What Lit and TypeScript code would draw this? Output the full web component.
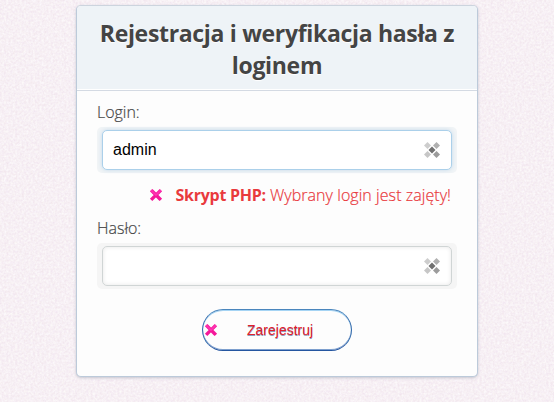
import { LitElement, html, css, svg } from "lit";
import { customElement, property } from "lit/decorators.js";

@customElement("cross-icon")
class CrossIcon extends LitElement {
  static styles = css`
    :host { display: block; width: 14px; height: 14px; }
    svg { display: block; }
  `;
  render() {
    return html`<svg width="14" height="14" viewBox="0 0 14 14">
      <path d="M2.9 2.9L11.1 11.1M11.1 2.9L2.9 11.1" stroke="#f5189a" stroke-width="3.8" stroke-linecap="square" fill="none" transform="translate(.7 .7) scale(.9)" />
      <path d="M2.6 2.6L7 7L11.4 2.6" stroke="#ff35b4" stroke-width="1.6" stroke-linecap="round" fill="none" />
    </svg>`;
  }
}

@customElement("text-field")
class TextField extends LitElement {
  @property() label = "";
  @property() value = "";
  @property({ type: Boolean, reflect: true }) active = false;

  static styles = css`
    :host { display: block; }
    .label {
      display: block; height: 22px; margin-bottom: 4px;
      font: 300 16px/22px "Open Sans", "Noto Sans", sans-serif;
      letter-spacing: -0.02px; color: #484848; -webkit-text-stroke: 0.2px #484848;
    }
    .ring { padding: 3px 5px; background: #f5f5f5; border-radius: 5px; }
    .box {
      box-sizing: border-box; height: 40px; padding: 0 11px 0 10px;
      display: flex; align-items: center; justify-content: space-between;
      background: #fff; border: 1px solid #d0d5d5; border-radius: 5px;
      box-shadow: inset 0 0 4px #e6e6e6;
      font: 16px/20px "Liberation Sans", Arial, sans-serif; color: #000;
    }
    :host([active]) .ring { background: #f1f4f6; }
    :host([active]) .box { border-color: #abd0ea; box-shadow: 0 0 4px #c3d9ea; }
    svg { display: block; }
  `;
  render() {
    const dots: [number, number, string][] = [
      [3.5, 3.5, "#cdcdcd"], [12.5, 3.5, "#b0b0b0"],
      [3.5, 12.5, "#c6c6c6"], [12.5, 12.5, "#9c9c9c"], [8, 8, "#707070"],
    ];
    return html`
      <span class="label">${this.label}</span>
      <div class="ring"><div class="box">
        <span>${this.value}</span>
        <svg width="16" height="16" viewBox="0 0 16 16">
          ${dots.map(([x, y, c]) => svg`<path d="M${x} ${y - 3.5}L${x + 3.5} ${y}L${x} ${y + 3.5}L${x - 3.5} ${y}Z" fill=${c} />`)}
        </svg>
      </div></div>`;
  }
}

@customElement("app-root")
class AppRoot extends LitElement {
  static styles = css`
    :host {
      display: block; position: relative; box-sizing: border-box;
      width: 554px; height: 402px; padding: 5px 0 0 76px; overflow: hidden;
      background: #f6f1f5;
    }
    .grain { position: absolute; inset: 0; }
    .card {
      position: relative; box-sizing: border-box; width: 402px; height: 372px;
      background: #fdfdfd; border: 1px solid #bccada; border-top-color: #ccd4de; border-radius: 5px;
      box-shadow: 0 1px 3px #c5c5cf; overflow: hidden;
    }
    h1 {
      box-sizing: border-box; margin: 0; height: 85px; padding-top: 11px;
      background: #eef3f7; border-bottom: 1px solid #d4dae3;
      box-shadow: inset 0 -1px #fff;
      font: 700 23px/32px "Open Sans", "Noto Sans", sans-serif;
      text-align: center; color: #444; text-shadow: 0 1px 1px #fff;
      letter-spacing: -0.32px; white-space: nowrap;
    }
    form { padding: 10px 20px 0; }
    .error {
      display: flex; align-items: center; justify-content: flex-end;
      height: 22px; margin: 11px 6px 11px 0;
      font: 300 16px/22px "Open Sans", "Noto Sans", sans-serif; color: #e93a3d; white-space: pre;
    }
    .error cross-icon { margin-right: 13px; }
    .error b { font-weight: 700; letter-spacing: -0.28px; }
    .error span { letter-spacing: 0.06px; -webkit-text-stroke: 0.2px #e93a3d; }
    button {
      display: flex; align-items: center; box-sizing: border-box;
      width: 150px; height: 42px; margin: 20px auto 0; padding: 0 0 0 1px;
      border: 1px solid #2f68aa; border-top-color: #4a86bd; border-bottom-color: #2556a0;
      border-radius: 21px; background: #fdfdfd; box-shadow: inset 0 1px #a5d4f4, inset 0 -1px #7d9fce;
      font: 14px/20px "Liberation Sans", Arial, sans-serif; color: #e0202c;
      text-shadow: 0 1px 0 rgba(44, 74, 128, 0.55);
    }
    button span { margin-left: 29px; }
  `;
  render() {
    return html`
      <svg class="grain" width="554" height="402">
        <filter id="grain" x="0" y="0" width="100%" height="100%" color-interpolation-filters="sRGB">
          <feTurbulence type="fractalNoise" baseFrequency="0.45" numOctaves="2" seed="4" />
          <feColorMatrix values="0.06 0 0 0 0.938  0.11 0 0 0 0.885  0.07 0.03 0 0 0.908  0 0 0 0 1" />
        </filter>
        <rect width="554" height="402" filter="url(#grain)" />
      </svg>
      <main class="card">
        <h1>Rejestracja i weryfikacja hasła z<br />loginem</h1>
        <form>
          <text-field label="Login:" value="admin" active></text-field>
          <div class="error"><cross-icon></cross-icon><b>Skrypt PHP:</b><span> Wybrany login jest zajęty!</span></div>
          <text-field label="Hasło:"></text-field>
          <button type="button"><cross-icon></cross-icon><span>Zarejestruj</span></button>
        </form>
      </main>`;
  }
}
